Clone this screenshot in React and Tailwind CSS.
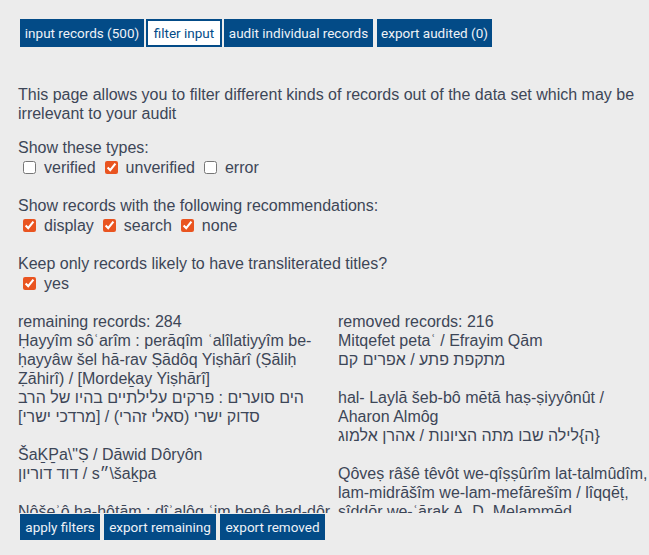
import React, { useState } from "react";

const navTabs = [
  { label: "input records (500)", w: "w-[124px]" },
  { label: "filter input", w: "w-[76px]", active: true },
  { label: "audit individual records", w: "w-[149px]" },
  { label: "export audited (0)", w: "w-[115px]" },
];

// each record: transliterated line(s), then the hebrew line; rtl marks lines rendered right-to-left
const remaining = [
  [
    "Ḥayyîm sôʿarîm : perāqîm ʿalîlatiyyîm be-ḥayyâw šel hā-rav Ṣādôq Yiṣhārî (Ṣāliḥ Ẓāhirî) / [Mordeḵay Yiṣhārî]",
    "הים סוערים : פרקים עלילתיים בהיו של הרב סדוק ישרי (סאלי זהרי) / [מרדכי ישרי]",
  ],
  ["ŠaḴP̱a\\\"Ṣ / Dāwid Dôryôn", "דוד דוריון / s״\\šaḵpa"],
  ["Nôšeʾô ha-ḥôtām : dîʾalôg ʿim benê had-dôr, sîddōr we-ʿārak A. D. Melammēd"],
];

const removed = [
  ["Mitqefet petaʿ / Efrayim Qām", "מתקפת פתע / אפרים קם"],
  [
    "hal- Laylā šeb-bô mētā haṣ-ṣiyyônût / Aharon Almôg",
    { rtl: true, text: "{ה}לילה שבו מתה הציונות / אהרן אלמוג" },
  ],
  [
    "Qôveṣ râšê têvôt we-qîṣṣûrîm lat-talmûdîm, lam-midrāšîm we-lam-mefārešîm / lîqqēṭ, sîddōr we-ʿārak A. D. Melammēd",
    "קובץ ראשי תבות וקצורים לתלמודים, למדרשים ולמפרשים",
  ],
];

const Check = ({ label, checked, onChange }) => (
  <label className="inline-flex items-center mr-[4px]">
    <input
      type="checkbox"
      checked={checked}
      onChange={onChange}
      className="ml-[5px] w-[13px] h-[13px] accent-[#e95420]"
    />
    <span className="ml-[8px]">{label}</span>
  </label>
);

const RecordList = ({ title, records }) => (
  <div className="min-w-0">
    <div>{title}</div>
    {records.map((rec, i) => (
      <div key={i} className="mb-[19px]">
        {rec.map((line, j) =>
          typeof line === "string" ? (
            <div key={j}>{line}</div>
          ) : (
            <div key={j} dir="rtl" className="text-left">
              {line.text}
            </div>
          )
        )}
      </div>
    ))}
  </div>
);

export default function App() {
  const [types, setTypes] = useState({ verified: false, unverified: true, error: false });
  const [recs, setRecs] = useState({ display: true, search: true, none: true });
  const [translit, setTranslit] = useState(true);

  const btn =
    "h-[26px] bg-[#034b87] text-[#eef2f7] text-[13.5px] font-['Roboto',sans-serif] whitespace-nowrap";

  return (
    <div className="min-h-screen bg-[#ececec] text-[#3d4657] font-['Liberation_Sans',Arial,sans-serif] text-[16px] leading-[19px]">
      <div className="pl-[20px] pt-[19px] flex gap-[2px]">
        {navTabs.map((t) => (
          <button
            key={t.label}
            className={`h-[28px] ${t.w} text-[13.5px] font-['Roboto',sans-serif] whitespace-nowrap ${
              t.active
                ? "bg-white border-2 border-[#034b87] text-[#034b87]"
                : "bg-[#034b87] text-[#eef2f7]"
            } ${t.label.startsWith("export") ? "ml-[2px]" : ""}`}
          >
            {t.label}
          </button>
        ))}
      </div>

      <div className="pl-[18px]">
        <p className="mt-[38px]">
          This page allows you to filter different kinds of records out of the data set which may be
          irrelevant to your audit
        </p>

        <div className="mt-[15px]">
          <div>Show these types:</div>
          <div className="flex h-[20px] items-center">
            {Object.keys(types).map((k) => (
              <Check
                key={k}
                label={k}
                checked={types[k]}
                onChange={() => setTypes({ ...types, [k]: !types[k] })}
              />
            ))}
          </div>
        </div>

        <div className="mt-[19px]">
          <div>Show records with the following recommendations:</div>
          <div className="flex h-[20px] items-center">
            {Object.keys(recs).map((k) => (
              <Check
                key={k}
                label={k}
                checked={recs[k]}
                onChange={() => setRecs({ ...recs, [k]: !recs[k] })}
              />
            ))}
          </div>
        </div>

        <div className="mt-[19px]">
          <div>Keep only records likely to have transliterated titles?</div>
          <div className="flex h-[20px] items-center">
            <Check label="yes" checked={translit} onChange={() => setTranslit(!translit)} />
          </div>
        </div>

        <div className="mt-[19px] h-[201px] overflow-hidden grid grid-cols-[320px_1fr]">
          <RecordList title="remaining records: 284" records={remaining} />
          <RecordList title="removed records: 216" records={removed} />
        </div>
      </div>

      <div className="pl-[20px] mt-[1px] flex gap-[4px]">
        <button className={`${btn} w-[80px]`}>apply filters</button>
        <button className={`${btn} w-[112px]`}>export remaining</button>
        <button className={`${btn} w-[105px]`}>export removed</button>
      </div>
    </div>
  );
}
